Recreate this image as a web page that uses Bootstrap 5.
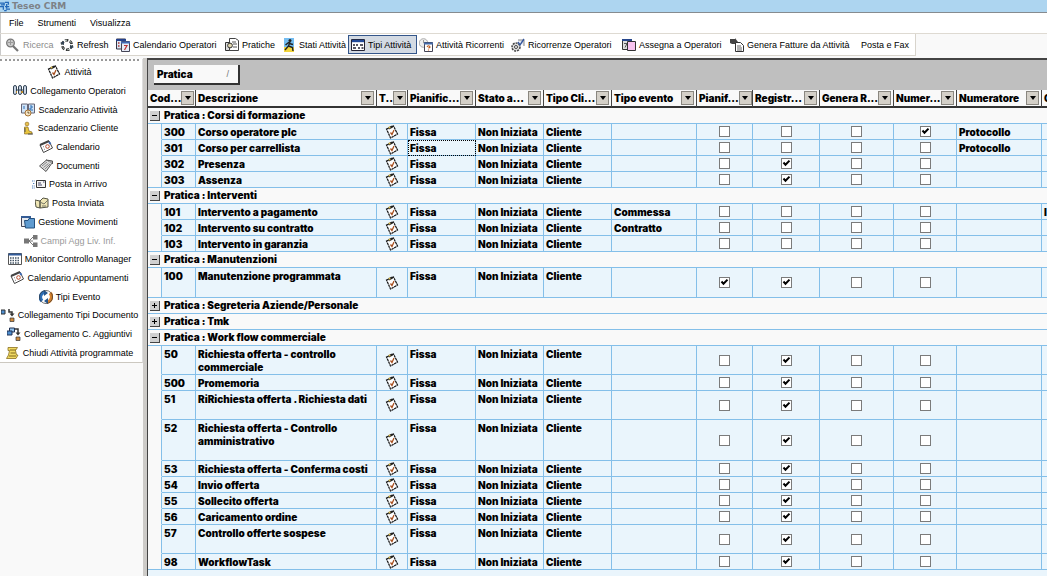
<!doctype html>
<html lang="it">
<head>
<meta charset="utf-8">
<meta name="viewport" content="width=device-width, initial-scale=1">
<title>Teseo CRM</title>
<link href="https://cdn.jsdelivr.net/npm/bootstrap@5.3.0/dist/css/bootstrap.min.css" rel="stylesheet">
<style>
:root{--line:#84bfe9;--cell:#eaf5fc;--pale:#f9f9f9}
body{font-family:"Liberation Sans",Arial,sans-serif;font-size:9px;line-height:14px;color:#000;background:#fff}
.ico{width:14px;height:14px;flex:none;overflow:visible}
.shell{min-height:100vh;padding-bottom:3px}
.titlebar{height:13px;background:#add5f0;border-bottom:1px solid #868b8f;color:#7d8287;font:bold 9px/12px "DejaVu Sans",sans-serif}
.titlebar .ico{width:10px;height:11px;margin-right:2px}
.menubar{height:21px;padding-left:9px;border-bottom:1px solid #dedad2;box-shadow:inset 1px 0 #c9c9c9}
.menubar button,.tool,.side a{border:0;background:none;padding:0;color:#000;text-decoration:none;white-space:nowrap}
.menubar button{margin-right:14px}
.toolrow{background:var(--pale);height:24px}
.tools{height:22px;display:grid;grid-template-columns:54px 56px 109px 57px 67px 70px 92px 111px 108px 131px 55px;padding-left:5px;background:#fff;border-right:1px solid #d8d4cc;border-bottom:1px solid #d8d4cc;box-shadow:inset 1px 0 #c9c9c9}
.tool{display:flex;align-items:center;gap:3px;border:1px solid transparent;margin:1px 0}
.tool.on{background:#d3dae3;border-color:#34568a;width:69px;padding-left:2px}
.tool:disabled{color:#8b8b8b}
.side{width:143px;flex:none;background:var(--pale)}
.sidelist{background:#fff;border-bottom:1px solid #ccc8c0;border-right:1px solid #dedede}
.sidelist ul{height:299px}
.grip{height:4px;width:139px;border-top:2px dotted #999;margin-top:1px}
.side li{width:139px}
.side a{gap:3px}
.side a.off{color:#9a9a9a}
.pane{min-width:0;overflow:hidden;border-left:4px solid #cdcbc8;background:var(--cell)}
.inner{border-left:1px solid #444;border-top:2px solid #444;min-height:100%}
.groupbar{background:#bfbfbf;height:30px;padding:5px 6px}
.chip{width:86px;height:20px;background:var(--pale);border:0;border-right:2px solid #333;border-bottom:2px solid #333;padding:0 9px 0 3px}
.chip,.gridt{font:900 10px/13px Inter,"DejaVu Sans",sans-serif;font-feature-settings:"calt" 0;color:#000}
.chip i{font:9px "Liberation Sans",sans-serif;color:#777}
.gridt{table-layout:fixed;border-collapse:separate;border-spacing:0;width:1100px;margin:0;white-space:nowrap}
.gridt th{height:18px;padding:0 2px;background:var(--pale);border-right:1px solid #444;border-bottom:2px solid #333;font-weight:900;vertical-align:middle}
.flt{width:13px;height:14px;padding:0;border:1px solid #8a8780;background:#d4d0c8;display:flex;align-items:center;justify-content:center;flex:none}
.flt::before{content:"";border:3px solid transparent;border-top:4px solid #000;border-bottom:0}
.gridt td{height:16px;padding:2px 1px 0 2px;background:var(--cell);border-right:1px solid var(--line);border-bottom:1px solid var(--line);vertical-align:top}
.gridt td.ind{background:var(--pale);border-bottom-color:var(--pale)}
.gridt tr.last td.ind{border-bottom-color:var(--line)}
.gridt td.grp{background:var(--pale);padding:1px 2px}
.gridt td.mid{vertical-align:middle;text-align:center;padding:0}
.gridt td.mid>*{display:block;margin:auto}
.gridt td.wrapt{white-space:normal}
.gridt tr.tall td{height:29px}.gridt tr.tallplus td{height:30px}.gridt tr.taller td{height:41px}
.gridt td.focus{outline:1px dotted #000;outline-offset:-1px}
.tgl{width:10px;height:10px;padding:0;border:0;border-right:1px solid #444;border-bottom:1px solid #444;background:#d0d0d0;position:relative}
.tgl::before,.tgl.plus::after{content:"";position:absolute;left:2px;top:4px;width:5px;height:1px;background:#000}
.tgl.plus::after{transform:rotate(90deg)}
.gridt input{appearance:none;width:11px;height:11px;border:1px solid #7b7b7b;background:#fff center/9px no-repeat}
.gridt input:checked{background-image:url("data:image/svg+xml,%3Csvg xmlns='http://www.w3.org/2000/svg' viewBox='0 0 9 9'%3E%3Cpath d='M1.5 3.5L3.5 5.8L7.5 1.6' fill='none' stroke='black' stroke-width='2'/%3E%3C/svg%3E")}
</style>
</head>
<body>
<svg width="0" height="0" class="position-absolute" aria-hidden="true"><defs>
<symbol id="note" viewBox="0 0 14 14"><path d="M1.500 4L8.500 1l4 8-7 4z" fill="#fff" stroke="#111" stroke-width="1.200" stroke-dasharray="2.500 .5"/><path d="M3.500 3.500l4-2" stroke="#222" stroke-width="2"/><circle cx="4.500" cy="2.500" r="1" fill="#e0c050"/><path d="M5.500 7.500l1.500 2L9 5" fill="none" stroke="#a85020" stroke-width="1.300"/></symbol>
<symbol id="app" viewBox="0 0 12 12"><path d="M0 2h5v2H1M6 1h4v3M0 6h4v4M6 6h5M7 9h5M5 11h3M8 3v5" fill="none" stroke="#2368b8" stroke-width="1.5"/></symbol>
<symbol id="lens" viewBox="0 0 14 14"><path d="M7 8l5 5" stroke="#777" stroke-width="2.2"/><circle cx="4.500" cy="5" r="3.800" fill="#ccc" stroke="#777" stroke-width="1.300"/><path d="M2 4.500h5M4.500 2v5" stroke="#999"/></symbol>
<symbol id="cycle" viewBox="0 0 14 14"><circle cx="7" cy="7" r="4.8" fill="none" stroke="#333" stroke-width="2.6" stroke-dasharray="3.4 1.6"/><circle cx="7" cy="7" r="4.8" fill="none" stroke="#cde3d8" stroke-width="1" stroke-dasharray="2 3"/><path d="M0 5l4-2v4zM14 9l-4 2V7z" fill="#345"/></symbol>
<symbol id="cal" viewBox="0 0 14 14"><path d="M.5 1h9v10h-9z" fill="#dce6f4" stroke="#334"/><path d="M0 2h10" stroke="#25418c" stroke-width="2"/><path d="M2 5h1.500M2 8h1.500" stroke="#a33" stroke-width="1.5"/><path d="M5.500 3.500h8v10h-8z" fill="#e6ecf8" stroke="#445"/><path d="M5 4.500h9" stroke="#4069b5" stroke-width="2"/><path d="M8 7.500h3L8.500 12" fill="none" stroke="#b33" stroke-width="1.200"/></symbol>
<symbol id="files" viewBox="0 0 14 14"><path d="M.5 4.500h6v8h-6z" fill="#ddd" stroke="#333"/><path d="M4.500 .5h6l3 2v10h-9z" fill="#fff" stroke="#444"/><path d="M7 4h4M8 6h4M8 9h4" stroke="#555"/><circle cx="5" cy="7.500" r="2.400" fill="#e2d9b0" stroke="#333"/></symbol>
<symbol id="run" viewBox="0 0 12 14"><path d="M1 0h10v9H1z" fill="#74bdf1"/><path d="M1 9h10v5H1z" fill="#f2d53c"/><circle cx="7" cy="2.5" r="1.5" fill="#222"/><path d="M7 4L5.5 8 2 12M5.5 8l4 1.5L10 13M2.5 7l3-2.5L8 6l2 .5" fill="none" stroke="#222" stroke-width="1.4"/></symbol>
<symbol id="types" viewBox="0 0 14 14"><path d="M.5 1.5h13v11H.5z" fill="#fff" stroke="#223"/><path d="M1 3h12" stroke="#1f4898" stroke-width="2.4"/><path d="M2 7h2M5 7h2M9 7h3M2 10h3M7 10h2M10.500 10h2" stroke="#223" stroke-width="1.6"/></symbol>
<symbol id="recur" viewBox="0 0 14 14"><circle cx="4.500" cy="5" r="4.300" fill="#eee" stroke="#aaa"/><path d="M4.500 2v3h3" fill="none" stroke="#999"/><path d="M5.500 4.500h8v9h-8z" fill="#fff" stroke="#445"/><path d="M5 5.500h9" stroke="#456aa8" stroke-width="2"/><path d="M8 9q2-2.500 3 0l-1.500 1.200M9.500 11.500v1" fill="none" stroke="#c05a18" stroke-width="1.200"/></symbol>
<symbol id="gear" viewBox="0 0 14 14"><circle cx="5" cy="9" r="4" fill="#ddd" stroke="#444" stroke-dasharray="2 1" stroke-width="1.500"/><circle cx="5" cy="9" r="1.500" fill="#fff" stroke="#444"/><path d="M7 2h6v6" fill="#e2e8f4" stroke="#888"/><path d="M7 4l2 3 4-6" fill="none" stroke="#37589c" stroke-width="1.400"/></symbol>
<symbol id="assign" viewBox="0 0 14 14"><path d="M.5 1.500h9v10h-9z" fill="#ddd" stroke="#333"/><path d="M0 2h10" stroke="#26468c" stroke-width="2"/><path d="M2 5.500h3l-2 4" fill="none" stroke="#555"/><path d="M5.500 3.500h8v9h-8z" fill="#f7c3f0" stroke="#333"/></symbol>
<symbol id="bill" viewBox="0 0 14 14"><path d="M0 1h5V0l3 4-3 3.500V6H2L0 5z" fill="#444"/><path d="M5.500 4.500h5l3 3v6h-8z" fill="#fff" stroke="#333"/><path d="M7 8h4M7 10h5M7 12h5" stroke="#666"/></symbol>
<symbol id="people" viewBox="0 0 14 14"><g fill="#c9d4e4" stroke="#345"><rect x=".5" y="1.500" width="3" height="9" rx="1.500"/><rect x="5.500" y="1.500" width="3" height="9" rx="1.500"/><rect x="10.500" y="1.500" width="3" height="9" rx="1.500"/></g><path d="M3 6h8" stroke="#345"/><path d="M3 8h1M8 8h2" stroke="#b98a30" stroke-width="2"/></symbol>
<symbol id="sched" viewBox="0 0 14 14"><path d="M.5 1h6v9h-6zM7.500 1h6v9h-6z" fill="#cfe3f7" stroke="#667"/><path d="M3 3v3M9 3h2v2H9v2h3" fill="none" stroke="#2c6fb5"/><circle cx="7" cy="10" r="3" fill="#f4e3c4" stroke="#a87432"/><path d="M7 8.500V10h1.500" fill="none" stroke="#653"/></symbol>
<symbol id="client" viewBox="0 0 14 14"><circle cx="6" cy="3" r="1.900" fill="#e8c04c" stroke="#8a6a20" stroke-width=".6"/><path d="M3.500 6H7l1 4 3 1v2H3.500z" fill="#e9c53f" stroke="#7a5d18" stroke-width=".6"/><path d="M4 7v4M7 13h5" stroke="#555"/></symbol>
<symbol id="tcal" viewBox="0 0 14 14"><path d="M1 5l9-4 3.500 7-9 4.500z" fill="#fff" stroke="#444"/><path d="M1 5l9-4" stroke="#444" stroke-width="2"/><path d="M4 7l1-.5M5 9.500l1-.5" stroke="#888"/><circle cx="8.500" cy="6.500" r="1.800" fill="none" stroke="#b84c2c"/><path d="M10 2l1.500 2" stroke="#3c68b4" stroke-width="2"/></symbol>
<symbol id="docs" viewBox="0 0 14 14"><path d="M.5 7l7-6 5.500 3-6 8.500z" fill="#ddd" stroke="#555"/><path d="M3 7l5-4M4.500 8.500l5-4M6 10l5-5" stroke="#888"/><path d="M7 1l6.500 1v3" fill="#aaa" stroke="#555"/></symbol>
<symbol id="inbox" viewBox="0 0 14 14"><path d="M0 4h3M1 6.500h2M0 9h3M0 11h3" stroke="#4c7fc0" stroke-dasharray="1 .7"/><path d="M4.500 3.500h9v7h-9z" fill="#f5f5f5" stroke="#333"/><path d="M6 6h3M6 8h4M11 5h1.500" stroke="#446"/></symbol>
<symbol id="sent" viewBox="0 0 14 14"><path d="M0 4l5 1v7L1 11zM5 5l3-3 5 1v8l-8 1z" fill="#efe6b5" stroke="#554"/><path d="M5 6l4 2 4-4M7 10h4" fill="none" stroke="#776"/></symbol>
<symbol id="moves" viewBox="0 0 14 14"><path d="M.5 1.500h9v10h-9z" fill="#e6eaf0" stroke="#445"/><path d="M0 2h10" stroke="#345c96" stroke-width="2"/><path d="M3.500 5.500H7l1-2h5.500v9.500h-9z" fill="#5f9bd0" stroke="#24507e"/></symbol>
<symbol id="tree" viewBox="0 0 14 14"><path d="M4 7h5M9 3L5 7l4 4" fill="none" stroke="#777"/><path d="M0 4.500h5v5H0zM9 1h4.500v4.500H9zM9 8.500h4.500V13H9z" fill="#777"/></symbol>
<symbol id="monitor" viewBox="0 0 14 14"><path d="M.5 1.500h13v11H.5z" fill="#fff" stroke="#555"/><path d="M.5 2.500h13" stroke="#315b9b" stroke-width="2"/><path d="M2 6h10M2 8.500h10M2 11h10" stroke="#456" stroke-width="1.300" stroke-dasharray="1.500 1"/></symbol>
<symbol id="swirl" viewBox="0 0 14 14"><path d="M6 2a5.300 5.300 0 0 0-3 9" fill="none" stroke="#2d6fb8" stroke-width="3.400"/><path d="M8 12a5.300 5.300 0 0 0 3-9" fill="none" stroke="#d9822b" stroke-width="3.400"/><path d="M5 0l4 3-4 3zM9 14l-4-3 4-3z" fill="#26568c"/><circle cx="7" cy="7" r="6.500" fill="none" stroke="#333" stroke-width=".7"/></symbol>
<symbol id="link" viewBox="0 0 14 14"><path d="M0 2h4v4H0z" fill="#4f8fd0" stroke="#333"/><path d="M8 1v3h3v3" fill="none" stroke="#333" stroke-width="1.500"/><path d="M8.500 5.500h5L11 8.500z" fill="#333"/><path d="M9 10h4v3.500H9z" fill="#d08a3c" stroke="#333" stroke-width=".7"/></symbol>
<symbol id="link2" viewBox="0 0 14 14"><path d="M2.500 1h5v4h-5z" fill="#8ec0ea" stroke="#235"/><path d="M0 4h5v4H0z" fill="#4f8fd0" stroke="#235"/><path d="M8 2h3v4" fill="none" stroke="#333" stroke-width="1.500"/><path d="M8.500 5.500h5L11 8.500z" fill="#333"/><path d="M9 10h4v3.500H9z" fill="#d08a3c" stroke="#333" stroke-width=".7"/></symbol>
<symbol id="scroll" viewBox="0 0 14 14"><path d="M2 1.500h9.500l-2 3 1 4.500H12l-2 3.500H.5L2.500 9l1-4.500H2z" fill="#f1da62" stroke="#8a7020" stroke-width=".8"/><path d="M4 4h6M4.500 7h5M3 10h7" stroke="#80681c"/></symbol>
</defs></svg>

<div class="shell d-flex flex-column">
  <header>
    <div class="titlebar d-flex align-items-center"><svg class="ico"><use href="#app"/></svg><span>Teseo CRM</span></div>
    <nav class="menubar d-flex align-items-center" aria-label="Menu"><button>File</button><button>Strumenti</button><button>Visualizza</button></nav>
    <div class="toolrow d-flex"><div class="tools" role="toolbar">
      <button class="tool" disabled><svg class="ico"><use href="#lens"/></svg>Ricerca</button>
      <button class="tool"><svg class="ico"><use href="#cycle"/></svg>Refresh</button>
      <button class="tool"><svg class="ico"><use href="#cal"/></svg>Calendario Operatori</button>
      <button class="tool"><svg class="ico"><use href="#files"/></svg>Pratiche</button>
      <button class="tool"><svg class="ico"><use href="#run"/></svg>Stati Attività</button>
      <button class="tool on"><svg class="ico"><use href="#types"/></svg>Tipi Attività</button>
      <button class="tool"><svg class="ico"><use href="#recur"/></svg>Attività Ricorrenti</button>
      <button class="tool"><svg class="ico"><use href="#gear"/></svg>Ricorrenze Operatori</button>
      <button class="tool"><svg class="ico"><use href="#assign"/></svg>Assegna a Operatori</button>
      <button class="tool"><svg class="ico"><use href="#bill"/></svg>Genera Fatture da Attività</button>
      <button class="tool">Posta e Fax</button>
    </div></div>
  </header>
  <div class="d-flex flex-fill">
    <aside class="side"><div class="sidelist"><div class="grip"></div><ul class="list-unstyled d-flex flex-column m-0" id="side"></ul></div></aside>
    <main class="pane flex-fill"><div class="inner">
      <div class="groupbar"><button class="chip d-flex align-items-center justify-content-between">Pratica<i>/</i></button></div>
      <table class="gridt">
        <colgroup id="cols"></colgroup>
        <thead><tr id="head"></tr></thead>
        <tbody id="rows"></tbody>
      </table>
    </div></main>
  </div>
</div>
<script>
const icon = n => `<svg class="ico" aria-hidden="true"><use href="#${n}"/></svg>`;
const side = [["note","Attività"],["people","Collegamento Operatori"],["sched","Scadenzario Attività"],["client","Scadenzario Cliente"],["tcal","Calendario"],["docs","Documenti"],["inbox","Posta in Arrivo"],["sent","Posta Inviata"],["moves","Gestione Movimenti"],["tree","Campi Agg Liv. Inf."],["monitor","Monitor Controllo Manager"],["tcal","Calendario Appuntamenti"],["swirl","Tipi Evento"],["link","Collegamento Tipi Documento"],["link2","Collegamento C. Aggiuntivi"],["scroll","Chiudi Attività programmate"]];
document.getElementById("side").innerHTML = side.map(([i,t]) => `<li class="d-flex flex-fill align-items-center justify-content-center"><a href="#" class="d-flex align-items-center${i==="tree"?" off":""}">${icon(i)}${t}</a></li>`).join("");

const cols = [["Cod...",34],["Descrizione",181],["T..",31],["Pianific...",68],["Stato a...",68],["Tipo Cli...",68],["Tipo evento",85],["Pianif...",56],["Registr...",67],["Genera R...",74],["Numer...",63],["Numeratore",85],["C",0]];
document.getElementById("cols").innerHTML = '<col style="width:14px">' + cols.map(c => c[1] ? `<col style="width:${c[1]}px">` : "<col>").join("");
document.getElementById("head").innerHTML = cols.map(([t,w],i) => `<th scope="col"${i?"":' colspan="2"'}>` + (w ? `<div class="d-flex justify-content-between align-items-center"><span>${t}</span><button class="flt" aria-label="Filtro ${t}"></button></div>` : t) + "</th>").join("");

/* code, description, checked columns (0-3), event type, numbering, row height class */
const groups = [
  ["Corsi di formazione",1,[["300","Corso operatore plc",[3],"","Protocollo"],["301","Corso per carrellista",[],"","Protocollo"],["302","Presenza",[1]],["303","Assenza",[1]]]],
  ["Interventi",1,[["101","Intervento a pagamento",[],"Commessa"],["102","Intervento su contratto",[],"Contratto"],["103","Intervento in garanzia",[]]]],
  ["Manutenzioni",1,[["100","Manutenzione programmata",[0,1],"","","tallplus"]]],
  ["Segreteria Aziende/Personale",0,[]],
  ["Tmk",0,[]],
  ["Work flow commerciale",1,[["50","Richiesta offerta - controllo commerciale",[1],"","","tall"],["500","Promemoria",[1]],["51","RiRichiesta offerta . Richiesta dati",[1],"","","tall"],["52","Richiesta offerta - Controllo amministrativo",[1],"","","taller"],["53","Richiesta offerta - Conferma costi",[1]],["54","Invio offerta",[1]],["55","Sollecito offerta",[1]],["56","Caricamento ordine",[1]],["57","Controllo offerte sospese",[1],"","","tall"],["98","WorkflowTask",[1]]]]
];
document.getElementById("rows").innerHTML = groups.map(([g,open,rows]) =>
  `<tr><td class="grp" colspan="14"><div class="d-flex align-items-center"><button class="tgl me-1${open?"":" plus"}" aria-label="Espandi ${g}"></button>Pratica : ${g}</div></td></tr>` +
  rows.map(([c,d,ck,ev="",nu="",h=""],i) => `<tr class="${h}${i===rows.length-1?" last":""}"><td class="ind"></td><td>${c}</td><td class="${h?"wrapt":""}">${d}</td><td class="mid">${icon("note")}</td><td class="${c==="301"?"focus":""}">Fissa</td><td>Non Iniziata</td><td>Cliente</td><td>${ev}</td>` +
    ["Pianificata","Registra","Genera","Numera"].map((l,k) => `<td class="mid"><input type="checkbox" aria-label="${l} ${c}"${ck.includes(k)?" checked":""}></td>`).join("") +
    `<td>${nu}</td><td>${c==="101"?"I":""}</td></tr>`).join("")).join("");
</script>
<script src="https://cdn.jsdelivr.net/npm/bootstrap@5.3.0/dist/js/bootstrap.bundle.min.js"></script>
</body>
</html>
